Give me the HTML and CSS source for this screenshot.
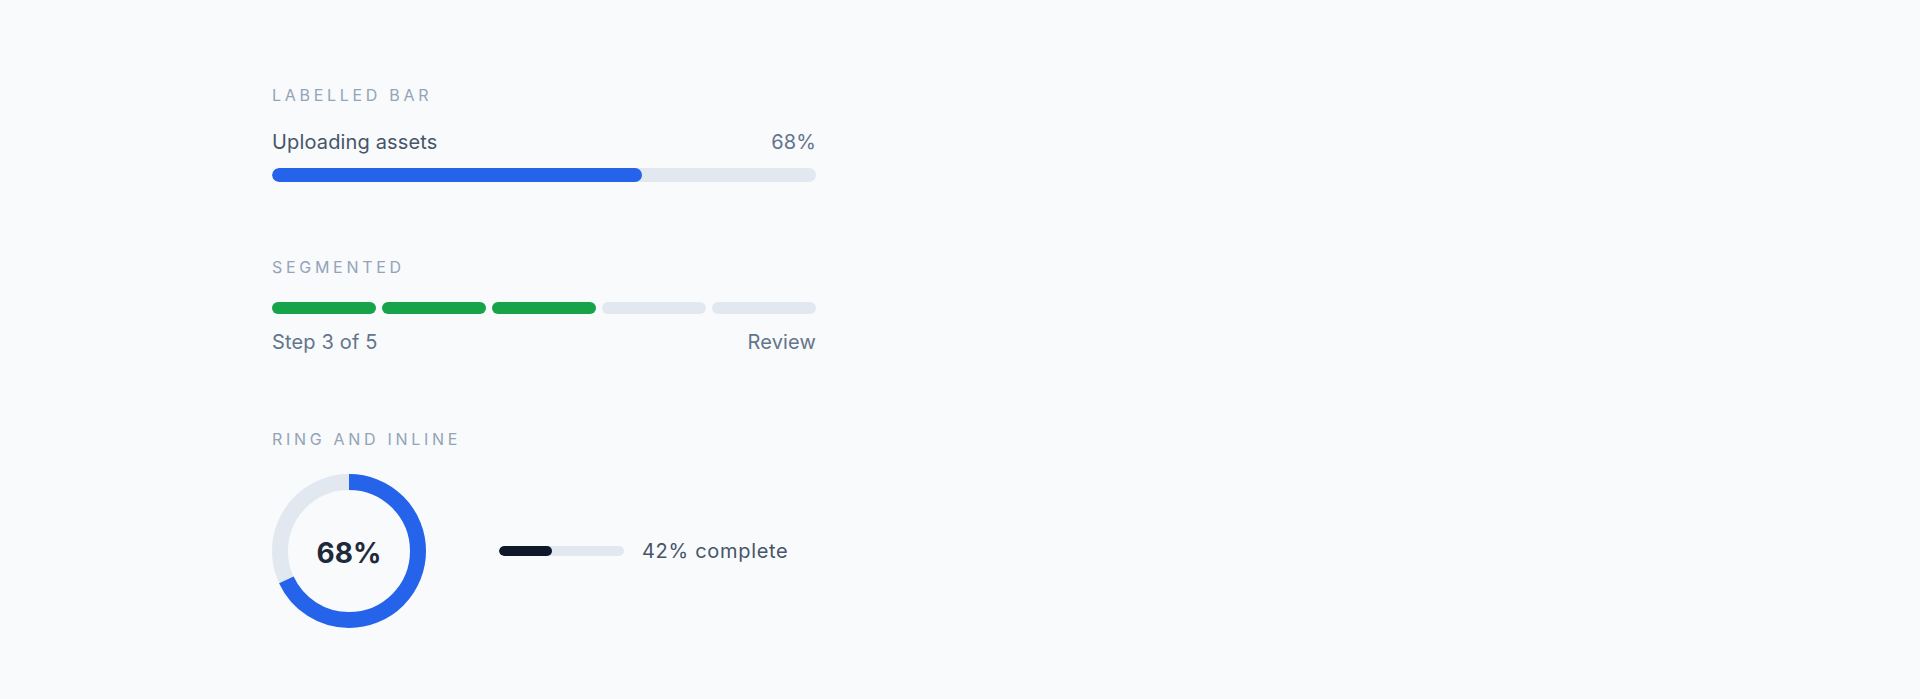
FILE: index.html
```html
<!DOCTYPE html>
<html lang="en">
<head>
  <meta charset="UTF-8" />
  <title>Progress indicators</title>
  <link rel="stylesheet" href="styles.css">
</head>
<body>

<main class="demo">

  <section class="group">
    <h2 class="group-title">Labelled bar</h2>
    <div class="row">
      <span class="row-name">Uploading assets</span>
      <span class="row-value">68%</span>
    </div>
    <div class="track">
      <div class="fill" style="width:68%"></div>
    </div>
  </section>

  <section class="group">
    <h2 class="group-title">Segmented</h2>
    <div class="steps">
      <span class="step done"></span>
      <span class="step done"></span>
      <span class="step done"></span>
      <span class="step"></span>
      <span class="step"></span>
    </div>
    <div class="row row-below">
      <span class="row-muted">Step 3 of 5</span>
      <span class="row-muted">Review</span>
    </div>
  </section>

  <section class="group">
    <h2 class="group-title">Ring and inline</h2>
    <div class="ring-line">
      <div class="ring">
        <svg width="154" height="154" viewBox="0 0 154 154">
          <circle class="ring-bg" cx="77" cy="77" r="69" />
          <!-- 2*pi*69 = 433.5, 68% of that = 294.8 -->
          <circle class="ring-fg" cx="77" cy="77" r="69"
                  stroke-dasharray="294.8 433.5"
                  transform="rotate(-90 77 77)" />
        </svg>
        <span class="ring-label">68%</span>
      </div>
      <div class="inline">
        <div class="mini-track">
          <div class="mini-fill" style="width:42%"></div>
        </div>
        <span class="inline-text">42% complete</span>
      </div>
    </div>
  </section>

</main>

</body>
</html>
```

FILE: styles.css
```css
body {
  font-family: Inter, "Noto Sans", Arial, sans-serif;
  background: #f8fafc;
  margin: 0;
}

.demo {
  width: 544px;
  padding: 85px 0 0 272px;
}

.group {
  margin-bottom: 75px;
}

.group:last-child {
  margin-bottom: 0;
}

.group-title {
  margin: 0 0 25px;
  font-size: 16px;
  line-height: 20px;
  font-weight: 400;
  letter-spacing: 3.7px;
  text-transform: uppercase;
  color: #94a3b8;
}

.row {
  display: flex;
  justify-content: space-between;
  font-size: 20px;
  line-height: 24px;
  letter-spacing: 0.15px;
  margin-bottom: 14px;
}

.row-below {
  margin: 16px 0 0;
}

.row-name {
  color: #475569;
}

.row-value,
.row-muted {
  color: #64748b;
}

.track {
  height: 14px;
  background: #e2e8f0;
  border-radius: 7px;
  overflow: hidden;
}

.fill {
  height: 100%;
  background: #2563eb;
  border-radius: 7px;
}

.steps {
  display: flex;
  gap: 6.5px;
}

.step {
  flex: 1;
  height: 12px;
  border-radius: 6px;
  background: #e2e8f0;
}

.step.done {
  background: #16a34a;
}

.ring-line {
  display: flex;
  align-items: center;
  gap: 73px;
}

.ring {
  position: relative;
  width: 154px;
  height: 154px;
}

.ring svg {
  display: block;
}

.ring-bg,
.ring-fg {
  fill: none;
  stroke-width: 16;
}

.ring-bg {
  stroke: #e2e8f0;
}

.ring-fg {
  stroke: #2563eb;
}

.ring-label {
  position: absolute;
  inset: 0;
  padding-top: 3px;
  display: flex;
  align-items: center;
  justify-content: center;
  font-size: 28px;
  font-weight: 700;
  color: #1e293b;
}

.inline {
  display: flex;
  align-items: center;
  gap: 18px;
}

.mini-track {
  width: 125px;
  height: 10px;
  background: #e2e8f0;
  border-radius: 5px;
  overflow: hidden;
}

.mini-fill {
  height: 100%;
  background: #0f172a;
  border-radius: 5px;
}

.inline-text {
  font-size: 20px;
  letter-spacing: 0.7px;
  color: #475569;
}
```
